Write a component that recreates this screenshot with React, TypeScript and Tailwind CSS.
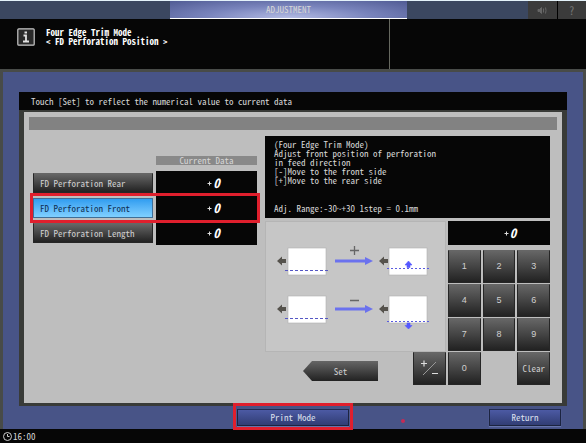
import { useState } from "react";

const rows = ["FD Perforation Rear", "FD Perforation Front", "FD Perforation Length"];
const digits = ["1", "2", "3", "4", "5", "6", "7", "8", "9", "0"];

const darkButton =
  "bg-linear-to-b from-[#666] via-[#444] to-[#222] border border-[#262626] border-t-[#666] text-[#d0d0d0]";
const blueButton =
  "bg-linear-to-b from-[#4c5aa4] to-[#313d74] border border-[#1c2440] border-t-[#222b50] text-[#dde0ee] shadow-[0_1px_1px_#6674ac]";

function Value() {
  return (
    <span className="inline-flex items-center gap-px text-white">
      <svg width="5" height="5" viewBox="0 0 5 5" aria-hidden="true">
        <path d="M2.5 0.5V4.5M0.5 2.5H4.5" stroke="#ddd" strokeWidth="1" />
      </svg>
      <span className="text-[13px] leading-3 font-bold italic">0</span>
    </span>
  );
}

function LeftArrow({ x, y }: { x: number; y: number }) {
  return <path transform={`translate(${x} ${y})`} d="M0 5L5 0.5V3H9V7H5V9.5Z" fill="#55524c" />;
}

function Diagram() {
  return (
    <svg viewBox="2 1 179 129" className="block h-full w-full" role="img" aria-label="Perforation shift direction">
      {[27, 75].map((y) => (
        <g key={y}>
          <rect x="24" y={y} width="38" height="27" fill="#fff" stroke="#b0b0b0" strokeWidth="0.6" />
          <rect x="125" y={y} width="38" height="27" fill="#fff" stroke="#b0b0b0" strokeWidth="0.6" />
          <LeftArrow x={13} y={y + 8} />
          <LeftArrow x={115} y={y + 8} />
          <path d={`M71 ${y + 13}H103`} stroke="#6b72ee" strokeWidth="3" />
          <path d={`M101 ${y + 9}L109 ${y + 13}L101 ${y + 17}Z`} fill="#6b72ee" />
          <path d={`M21 ${y + 22.5}H65`} stroke="#5557c4" strokeDasharray="3 2" />
        </g>
      ))}
      <path d="M123 47.5H166M123 100.5H166" stroke="#5a5ce0" strokeDasharray="2 2" />
      <path d="M90.5 25V34M86 29.5H95M86 79.5H95" stroke="#666" strokeWidth="1.3" fill="none" />
      <path d="M144.5 40L148 44H146V46.5H143V44H141Z" fill="#5558ff" stroke="#5558ff" strokeWidth="0.6" />
      <path d="M144.5 108L148 104.5H146V102H143V104.5H141Z" fill="#5558ff" stroke="#5558ff" strokeWidth="0.6" />
    </svg>
  );
}

export default function App() {
  const [selected, setSelected] = useState(1);

  return (
    <div className="flex min-h-screen flex-col bg-[#060606] font-['Noto_Sans_Mono_CJK_JP','Liberation_Mono',monospace] text-[9px] leading-[9px] text-[#d6d6d6]">
      <nav className="grid h-[19px] grid-cols-[170fr_237fr_121fr_58fr] border-t border-[#e4f2fa] bg-[#3b4760]">
        <span />
        <h1 className="flex items-center justify-center border-b border-white bg-[#5c68a2] bg-radial-[at_50%_100%] from-[#b4bce4] via-[#7984bc] to-[#505b94]">
          ADJUSTMENT
        </h1>
        <span />
        <div className="grid grid-cols-2 gap-px bg-black text-[#777]">
          <button type="button" aria-label="Sound" className="flex items-center justify-center bg-[#3b3b3b]">
            <svg width="10" height="9" viewBox="0 0 10 9" fill="none" stroke="#666" aria-hidden="true">
              <path d="M1 3.5H2.5L4.5 1.5V7.5L2.5 5.5H1Z" fill="#666" />
              <path d="M6.5 2.5V6.5M8.5 1.5Q9.5 4.5 8.5 7.5" />
            </svg>
          </button>
          <button type="button" aria-label="Help" className="bg-[#3b3b3b] text-[11px]">?</button>
        </div>
      </nav>

      <header className="grid h-[50px] grid-cols-[390fr_196fr]">
        <div className="flex items-start gap-[11px] border-r border-[#66685f] pt-[9px] pl-[17px]">
          <svg width="18" height="18" viewBox="0 0 18 18" fill="none" aria-hidden="true">
            <rect x="0.8" y="0.8" width="16.4" height="16.4" rx="1" fill="#292929" stroke="#c9c9c9" strokeWidth="1.2" />
            <path d="M7.5 4.5H10M6.5 7.5H9V13M6 13.5H12" stroke="#e0e0e0" strokeWidth="1.8" />
          </svg>
          <p className="font-bold text-white">
            Four Edge Trim Mode
            <br />
            &lt; FD Perforation Position &gt;
          </p>
        </div>
      </header>

      <main className="flex flex-1 flex-col border-x-[3px] border-t-[3px] border-[#484b48] bg-[#485487] px-[16px] pt-[20px]">
        <section className="flex flex-1 flex-col border-x-[5px] border-b-[3px] border-[#393b38] bg-[#bebebe]">
          <h2 className="-mx-[5px] flex h-[20px] items-center border-b-2 border-[#393b38] bg-[#060606] pl-[12px]">
            Touch [Set] to reflect the numerical value to current data
          </h2>
          <div className="mx-[5px] mt-[5px] h-[13px] bg-[#828282]" />

          <div className="grid grid-cols-[224fr_285fr] gap-2 pt-[6px] pr-3 pb-4 pl-[9px]">
            <div className="pt-5">
              <div className="grid grid-cols-[120fr_101fr] gap-[3px]">
                <span />
                <span className="bg-[#898989] text-center">Current Data</span>
              </div>
              <div className="mt-[6px] flex flex-col gap-px">
                {rows.map((name, i) => (
                  <div key={name} className="relative grid grid-cols-[120fr_101fr] items-center gap-[3px]">
                    <button
                      type="button"
                      aria-pressed={selected === i}
                      onClick={() => setSelected(i)}
                      className={`h-[20px] pl-[6px] text-left whitespace-nowrap ${
                        selected === i
                          ? "border border-[#3f6e96] bg-linear-to-b from-[#2f9df0] to-[#7fd0ff] text-[#0e2f55]"
                          : darkButton
                      }`}
                    >
                      {name}
                    </button>
                    <output aria-label={name} className="flex h-6 items-center justify-center bg-[#060606] pl-[14px]">
                      <Value />
                    </output>
                    {i === 1 && (
                      <span className="pointer-events-none absolute -inset-x-[3px] -inset-y-[3px] z-10 border-[3px] border-[#e01f2d]" />
                    )}
                  </div>
                ))}
              </div>
            </div>

            <div>
              <div className="h-[82px] bg-[#060606] pt-1 pl-[9px] whitespace-nowrap">
                <p>(Four Edge Trim Mode)</p>
                <p>Adjust front position of perforation</p>
                <p>in feed direction</p>
                <p>[-]Move to the front side</p>
                <p>[+]Move to the rear side</p>
                <p className="pt-[19px]">Adj. Range:-30~+30 1step = 0.1mm</p>
              </div>
              <div className="mt-[3px] grid grid-cols-[181fr_102fr] gap-[2px]">
                <div>
                  <div className="h-[131px] border border-[#b5b5b5] bg-[#c6c6c6]">
                    <Diagram />
                  </div>
                  <div className="flex items-start justify-between pl-[38px]">
                    <button
                      type="button"
                      className="mt-[9px] h-5 w-[75px] bg-linear-to-b from-[#666] via-[#444] to-[#222] text-[#d0d0d0] [clip-path:polygon(0_50%,12%_0,100%_0,100%_100%,12%_100%)]"
                    >
                      Set
                    </button>
                    <button type="button" aria-label="Plus or minus" className={`flex h-[33px] w-[33px] items-center justify-center ${darkButton}`}>
                      <svg width="21" height="21" viewBox="0 0 21 21" fill="none" stroke="#ddd" aria-hidden="true">
                        <path d="M5 2.5V8.5M2 5.5H8M13 15.5H19" strokeWidth="1.2" />
                        <path d="M4 17L17 4" stroke="#999" />
                      </svg>
                    </button>
                  </div>
                </div>
                <div>
                  <output aria-label="Entered value" className="mb-[5px] flex h-6 items-center justify-center bg-[#060606] pl-[22px]">
                    <Value />
                  </output>
                  <div className="grid grid-cols-3 gap-x-[2px] gap-y-px">
                    {digits.map((d) => (
                      <button key={d} type="button" className={`h-[33px] font-['Liberation_Sans',sans-serif] ${darkButton}`}>
                        {d}
                      </button>
                    ))}
                    <button type="button" className={`col-start-3 h-[33px] ${darkButton}`}>
                      Clear
                    </button>
                  </div>
                </div>
              </div>
            </div>
          </div>
        </section>

        <div className="grid h-[23px] grid-cols-[218fr_112fr_140fr_72fr_6fr] items-center">
          <span />
          <div className="relative">
            <button type="button" className={`block h-[17px] w-full ${blueButton}`}>
              Print Mode
            </button>
            <span className="pointer-events-none absolute -inset-x-1 -top-[6px] -bottom-[4px] border-[3px] border-[#e01f2d]" />
          </div>
          <span className="mb-[6px] ml-[52px] h-1 w-1 self-end rounded-full bg-[#c52b55]" />
          <button type="button" className={`h-[17px] ${blueButton}`}>
            Return
          </button>
        </div>
      </main>

      <footer className="flex h-[14px] items-center gap-px pl-[3px]">
        <svg width="9" height="9" viewBox="0 0 9 9" fill="none" stroke="#ccc" aria-hidden="true">
          <circle cx="4.5" cy="4.5" r="4" />
          <path d="M4.5 2V4.5H6.5" />
        </svg>
        <time>16:00</time>
      </footer>
    </div>
  );
}
